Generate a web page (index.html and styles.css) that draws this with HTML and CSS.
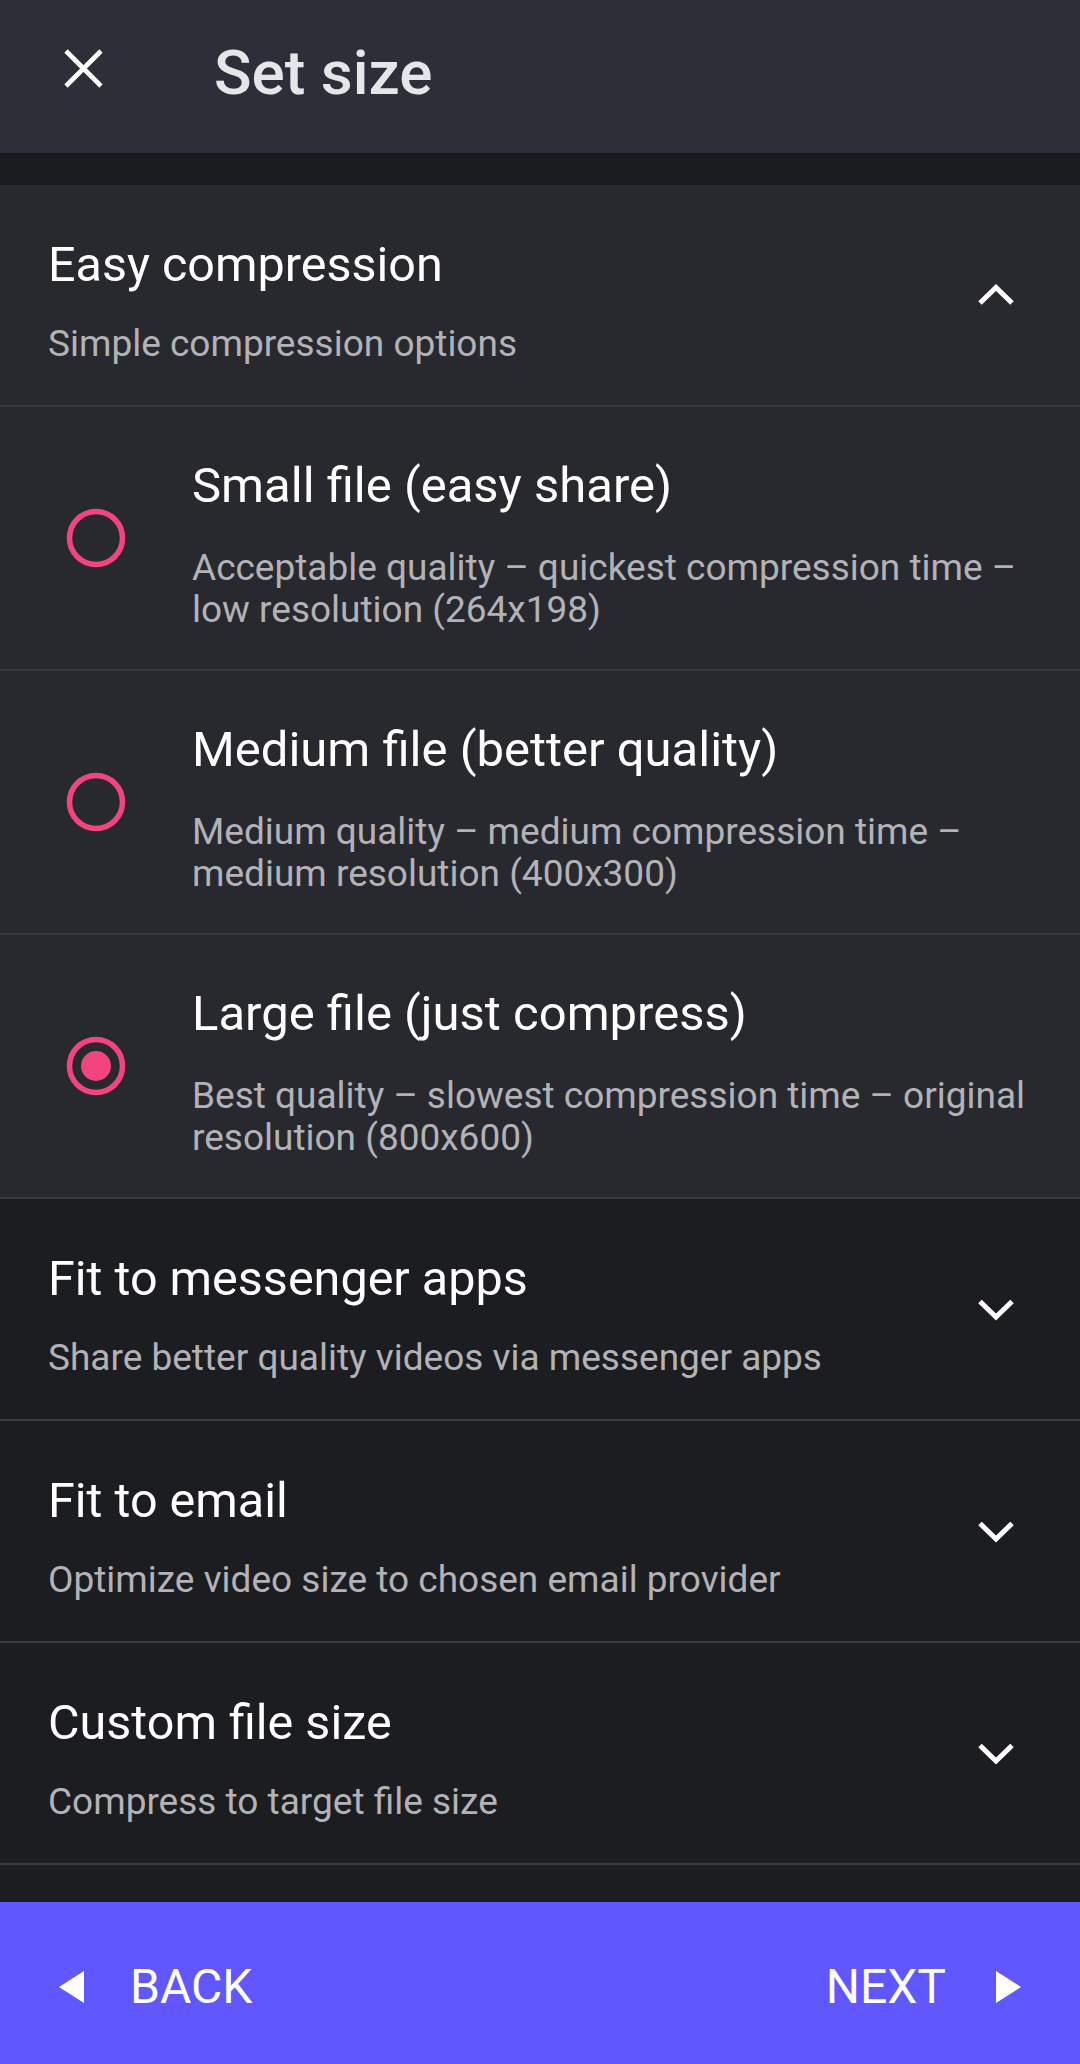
FILE: index.html
```html
<!DOCTYPE html>
<html lang="en">
<head>
<meta charset="utf-8">
<title>Set size</title>
<link rel="stylesheet" href="styles.css">
</head>
<body>
<div class="app">
  <header class="topbar">
    <svg class="close-icon" width="41" height="41" viewBox="0 0 41 41" aria-hidden="true">
      <path d="M3 3 L38 38 M38 3 L3 38" stroke="#ffffff" stroke-width="4.6" fill="none"/>
    </svg>
    <h1 class="topbar-title">Set size</h1>
  </header>
  <div class="strip"></div>

  <main class="list">
    <section class="group group-open">
      <div class="group-head">
        <div class="group-text">
          <div class="group-title">Easy compression</div>
          <div class="group-sub">Simple compression options</div>
        </div>
        <svg class="chevron" width="36" height="24" viewBox="0 0 36 24" aria-hidden="true">
          <polyline points="2,20 18,4.5 34,20" stroke="#ffffff" stroke-width="5" fill="none"/>
        </svg>
      </div>

      <div class="option">
        <svg class="radio" width="60" height="60" viewBox="0 0 60 60" aria-hidden="true">
          <circle cx="30" cy="30" r="26.5" stroke="#f2457f" stroke-width="5.5" fill="none"/>
        </svg>
        <div class="option-text">
          <div class="option-title">Small file (easy share)</div>
          <div class="option-desc">Acceptable quality – quickest compression time – low resolution (264x198)</div>
        </div>
      </div>

      <div class="option">
        <svg class="radio" width="60" height="60" viewBox="0 0 60 60" aria-hidden="true">
          <circle cx="30" cy="30" r="26.5" stroke="#f2457f" stroke-width="5.5" fill="none"/>
        </svg>
        <div class="option-text">
          <div class="option-title">Medium file (better quality)</div>
          <div class="option-desc">Medium quality – medium compression time – medium resolution (400x300)</div>
        </div>
      </div>

      <div class="option">
        <svg class="radio" width="60" height="60" viewBox="0 0 60 60" aria-hidden="true">
          <circle cx="30" cy="30" r="26.5" stroke="#f2457f" stroke-width="5.5" fill="none"/>
          <circle cx="30" cy="30" r="15" fill="#f2457f"/>
        </svg>
        <div class="option-text">
          <div class="option-title">Large file (just compress)</div>
          <div class="option-desc">Best quality – slowest compression time – original resolution (800x600)</div>
        </div>
      </div>
    </section>

    <section class="group">
      <div class="group-head">
        <div class="group-text">
          <div class="group-title">Fit to messenger apps</div>
          <div class="group-sub">Share better quality videos via messenger apps</div>
        </div>
        <svg class="chevron" width="36" height="24" viewBox="0 0 36 24" aria-hidden="true">
          <polyline points="2,4.5 18,20 34,4.5" stroke="#ffffff" stroke-width="5" fill="none"/>
        </svg>
      </div>
    </section>

    <section class="group">
      <div class="group-head">
        <div class="group-text">
          <div class="group-title">Fit to email</div>
          <div class="group-sub">Optimize video size to chosen email provider</div>
        </div>
        <svg class="chevron" width="36" height="24" viewBox="0 0 36 24" aria-hidden="true">
          <polyline points="2,4.5 18,20 34,4.5" stroke="#ffffff" stroke-width="5" fill="none"/>
        </svg>
      </div>
    </section>

    <section class="group">
      <div class="group-head">
        <div class="group-text">
          <div class="group-title">Custom file size</div>
          <div class="group-sub">Compress to target file size</div>
        </div>
        <svg class="chevron" width="36" height="24" viewBox="0 0 36 24" aria-hidden="true">
          <polyline points="2,4.5 18,20 34,4.5" stroke="#ffffff" stroke-width="5" fill="none"/>
        </svg>
      </div>
    </section>
  </main>

  <footer class="bottombar">
    <div class="nav-btn nav-back">
      <svg width="25" height="32" viewBox="0 0 25 32" aria-hidden="true">
        <polygon points="25,0 25,32 0,16" fill="#ffffff"/>
      </svg>
      <span>BACK</span>
    </div>
    <div class="nav-btn nav-next">
      <span>NEXT</span>
      <svg width="25" height="32" viewBox="0 0 25 32" aria-hidden="true">
        <polygon points="0,0 0,32 25,16" fill="#ffffff"/>
      </svg>
    </div>
  </footer>
</div>
</body>
</html>
```

FILE: styles.css
```css
html, body {
  margin: 0;
  padding: 0;
  background: #1c1d21;
}

body {
  font-family: Roboto, "Noto Sans", "Liberation Sans", sans-serif;
  color: #ffffff;
}

.app {
  display: flex;
  flex-direction: column;
  width: 1080px;
  height: 2064px;
  overflow: hidden;
}

.topbar {
  display: flex;
  align-items: flex-start;
  height: 153px;
  flex: none;
  background: #2c2f38;
  box-sizing: border-box;
}

.close-icon {
  margin: 48px 0 0 63px;
  flex: none;
}

.topbar-title {
  margin: 42px 0 0 110px;
  font-size: 62px;
  line-height: 62px;
  font-weight: 500;
  color: #e6e6e8;
}

.strip {
  height: 32px;
  flex: none;
  background: #1a1b1f;
}

.list {
  flex: 1;
  overflow: hidden;
  background: #1c1d21;
}

.group {
  background: #1c1d21;
}

.group-open {
  background: #28292f;
}

.group-head {
  display: flex;
  align-items: center;
  height: 222px;
  box-sizing: border-box;
  padding: 0 66px 0 48px;
  border-bottom: 2px solid #3a3b41;
}

.group-text {
  flex: 1;
  padding-top: 12px;
}

.group-title {
  font-size: 48.5px;
  line-height: 54px;
  color: #ffffff;
}

.group-sub {
  margin-top: 31px;
  font-size: 37px;
  line-height: 42px;
  color: #b3b3b7;
}

.chevron {
  flex: none;
}

.option {
  display: flex;
  align-items: center;
  height: 264px;
  box-sizing: border-box;
  border-bottom: 2px solid #3a3b41;
}

.radio {
  flex: none;
  margin: 0 66px;
}

.option-text {
  flex: 1;
  padding: 12px 48px 0 0;
}

.option-title {
  font-size: 49px;
  line-height: 56px;
  color: #ffffff;
}

.option-desc {
  margin-top: 33px;
  font-size: 37px;
  line-height: 42px;
  color: #b3b3b7;
}

.bottombar {
  display: flex;
  justify-content: space-between;
  align-items: center;
  height: 162px;
  flex: none;
  box-sizing: border-box;
  padding: 8px 59px 0 59px;
  background: #6157ff;
}

.nav-btn {
  display: flex;
  align-items: center;
  gap: 46px;
  font-size: 48px;
  line-height: 48px;
  color: #ffffff;
}

.nav-next {
  gap: 50px;
}
```
